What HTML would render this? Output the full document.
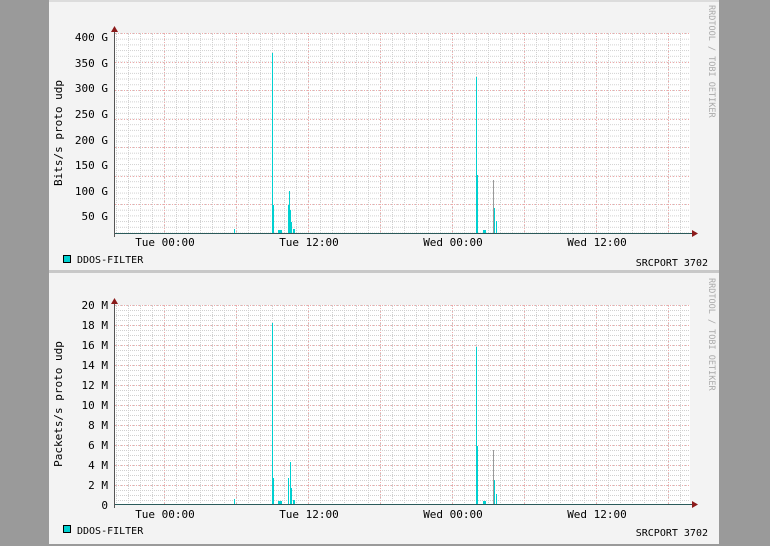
<!DOCTYPE html>
<html><head><meta charset="utf-8"><style>
html,body{margin:0;padding:0;background:#9a9a9a;width:770px;height:546px;overflow:hidden}
svg{position:absolute;left:0;top:0}
text{font-family:"DejaVu Sans Mono","Liberation Mono",monospace;font-size:11px;fill:#000}
</style></head><body>
<svg width="770" height="546" xmlns="http://www.w3.org/2000/svg">
<defs>
<pattern id="v1" x="116" y="0" width="12" height="546" patternUnits="userSpaceOnUse"><line x1="0.5" y1="0" x2="0.5" y2="546" stroke="#d0d0d0" stroke-dasharray="1,1" shape-rendering="crispEdges"/></pattern>
<pattern id="h1" x="0" y="33" width="770" height="5.7" patternUnits="userSpaceOnUse"><line x1="0" y1="0.5" x2="770" y2="0.5" stroke="#d0d0d0" stroke-dasharray="1,1" shape-rendering="crispEdges"/></pattern>
<pattern id="h2" x="0" y="305" width="770" height="5" patternUnits="userSpaceOnUse"><line x1="0" y1="0.5" x2="770" y2="0.5" stroke="#d0d0d0" stroke-dasharray="1,1" shape-rendering="crispEdges"/></pattern>
</defs>
<rect x="49" y="0" width="670" height="270" fill="#f3f3f3"/>
<rect x="49" y="270" width="670" height="3" fill="#c8c8c8"/>
<rect x="49" y="273" width="670" height="271" fill="#f3f3f3"/>
<rect x="49" y="0" width="670" height="2" fill="#dcdcdc"/>

<!-- panel 1 -->
<rect x="115" y="33" width="575" height="200" fill="#fff"/>
<rect x="115" y="33" width="575" height="200" fill="url(#v1)"/>
<rect x="115" y="33" width="575" height="200" fill="url(#h1)"/>
<g stroke="#f0a8a8" stroke-dasharray="1,2" shape-rendering="crispEdges">
<line x1="164.5" y1="33" x2="164.5" y2="233"/><line x1="236.5" y1="33" x2="236.5" y2="233"/><line x1="308.5" y1="33" x2="308.5" y2="233"/><line x1="380.5" y1="33" x2="380.5" y2="233"/><line x1="452.5" y1="33" x2="452.5" y2="233"/><line x1="524.5" y1="33" x2="524.5" y2="233"/><line x1="596.5" y1="33" x2="596.5" y2="233"/><line x1="668.5" y1="33" x2="668.5" y2="233"/>
<line x1="115" y1="33.5" x2="690" y2="33.5"/><line x1="115" y1="62.5" x2="690" y2="62.5"/><line x1="115" y1="90.5" x2="690" y2="90.5"/><line x1="115" y1="119.5" x2="690" y2="119.5"/><line x1="115" y1="147.5" x2="690" y2="147.5"/><line x1="115" y1="176.5" x2="690" y2="176.5"/><line x1="115" y1="204.5" x2="690" y2="204.5"/>
</g>
<g fill="#00d0d0">
<rect x="234" y="229" width="1" height="4"/>
<rect x="272" y="53" width="1" height="180"/><rect x="273" y="205" width="1" height="28"/>
<rect x="278" y="230" width="4" height="3"/>
<rect x="288" y="205" width="1" height="28"/><rect x="289" y="191" width="1" height="42"/><rect x="290" y="210" width="1" height="23"/><rect x="291" y="222" width="1" height="11"/><rect x="293" y="229" width="2" height="4"/>
<rect x="476" y="77" width="1" height="156"/><rect x="477" y="175" width="1" height="58"/>
<rect x="483" y="230" width="3" height="3"/>
<rect x="494" y="208" width="1" height="25"/><rect x="496" y="221" width="1" height="12"/>
</g>
<rect x="493" y="180" width="1" height="53" fill="#999"/>
<line x1="115" y1="233.5" x2="692" y2="233.5" stroke="#2a5a5a"/>
<line x1="114.5" y1="30" x2="114.5" y2="237" stroke="#555"/>
<path d="M111 32 L114.5 26 L118 32Z" fill="#8b1a1a"/>
<path d="M692 230 L698 233.5 L692 237Z" fill="#8b1a1a"/>
<g text-anchor="end">
<text x="108" y="41">400 G</text><text x="108" y="67">350 G</text><text x="108" y="92">300 G</text><text x="108" y="118">250 G</text><text x="108" y="144">200 G</text><text x="108" y="169">150 G</text><text x="108" y="195">100 G</text><text x="108" y="220">50 G</text>
</g>
<g text-anchor="middle">
<text x="165" y="246">Tue 00:00</text><text x="309" y="246">Tue 12:00</text><text x="453" y="246">Wed 00:00</text><text x="597" y="246">Wed 12:00</text>
</g>
<text transform="translate(62,133) rotate(-90)" text-anchor="middle" font-size="12">Bits/s proto udp</text>
<text transform="translate(709,5) rotate(90)" style="font-size:8.5px;fill:#aaa">RRDTOOL / TOBI OETIKER</text>
<rect x="63.5" y="255.5" width="7" height="7" fill="#00d0d0" stroke="#000"/>
<text x="77" y="263" style="font-size:10px">DDOS-FILTER</text>
<text x="708" y="266" text-anchor="end" style="font-size:10px">SRCPORT 3702</text>

<!-- panel 2 -->
<rect x="115" y="305" width="575" height="199" fill="#fff"/>
<rect x="115" y="305" width="575" height="199" fill="url(#v1)"/>
<rect x="115" y="305" width="575" height="199" fill="url(#h2)"/>
<g stroke="#f0a8a8" stroke-dasharray="1,2" shape-rendering="crispEdges">
<line x1="164.5" y1="305" x2="164.5" y2="504"/><line x1="236.5" y1="305" x2="236.5" y2="504"/><line x1="308.5" y1="305" x2="308.5" y2="504"/><line x1="380.5" y1="305" x2="380.5" y2="504"/><line x1="452.5" y1="305" x2="452.5" y2="504"/><line x1="524.5" y1="305" x2="524.5" y2="504"/><line x1="596.5" y1="305" x2="596.5" y2="504"/><line x1="668.5" y1="305" x2="668.5" y2="504"/>
<line x1="115" y1="305.5" x2="690" y2="305.5"/><line x1="115" y1="325.5" x2="690" y2="325.5"/><line x1="115" y1="345.5" x2="690" y2="345.5"/><line x1="115" y1="365.5" x2="690" y2="365.5"/><line x1="115" y1="385.5" x2="690" y2="385.5"/><line x1="115" y1="405.5" x2="690" y2="405.5"/><line x1="115" y1="425.5" x2="690" y2="425.5"/><line x1="115" y1="445.5" x2="690" y2="445.5"/><line x1="115" y1="465.5" x2="690" y2="465.5"/><line x1="115" y1="485.5" x2="690" y2="485.5"/>
</g>
<g fill="#00d0d0">
<rect x="234" y="499" width="1" height="5"/>
<rect x="272" y="323" width="1" height="181"/><rect x="273" y="478" width="1" height="26"/>
<rect x="278" y="501" width="4" height="3"/>
<rect x="288" y="478" width="1" height="26"/><rect x="290" y="462" width="1" height="42"/><rect x="291" y="488" width="1" height="16"/><rect x="293" y="500" width="2" height="4"/>
<rect x="476" y="347" width="1" height="157"/><rect x="477" y="446" width="1" height="58"/>
<rect x="483" y="501" width="3" height="3"/>
<rect x="494" y="480" width="1" height="24"/><rect x="496" y="494" width="1" height="10"/>
</g>
<rect x="493" y="450" width="1" height="54" fill="#999"/>
<line x1="115" y1="504.5" x2="692" y2="504.5" stroke="#2a5a5a"/>
<line x1="114.5" y1="302" x2="114.5" y2="508" stroke="#555"/>
<path d="M111 304 L114.5 298 L118 304Z" fill="#8b1a1a"/>
<path d="M692 501 L698 504.5 L692 508Z" fill="#8b1a1a"/>
<g text-anchor="end">
<text x="108" y="309">20 M</text><text x="108" y="329">18 M</text><text x="108" y="349">16 M</text><text x="108" y="369">14 M</text><text x="108" y="389">12 M</text><text x="108" y="409">10 M</text><text x="108" y="429">8 M</text><text x="108" y="449">6 M</text><text x="108" y="469">4 M</text><text x="108" y="489">2 M</text><text x="108" y="509">0</text>
</g>
<g text-anchor="middle">
<text x="165" y="518">Tue 00:00</text><text x="309" y="518">Tue 12:00</text><text x="453" y="518">Wed 00:00</text><text x="597" y="518">Wed 12:00</text>
</g>
<text transform="translate(62,404) rotate(-90)" text-anchor="middle" font-size="12">Packets/s proto udp</text>
<text transform="translate(709,278) rotate(90)" style="font-size:8.5px;fill:#aaa">RRDTOOL / TOBI OETIKER</text>
<rect x="63.5" y="525.5" width="7" height="7" fill="#00d0d0" stroke="#000"/>
<text x="77" y="534" style="font-size:10px">DDOS-FILTER</text>
<text x="708" y="536" text-anchor="end" style="font-size:10px">SRCPORT 3702</text>
</svg>
</body></html>
